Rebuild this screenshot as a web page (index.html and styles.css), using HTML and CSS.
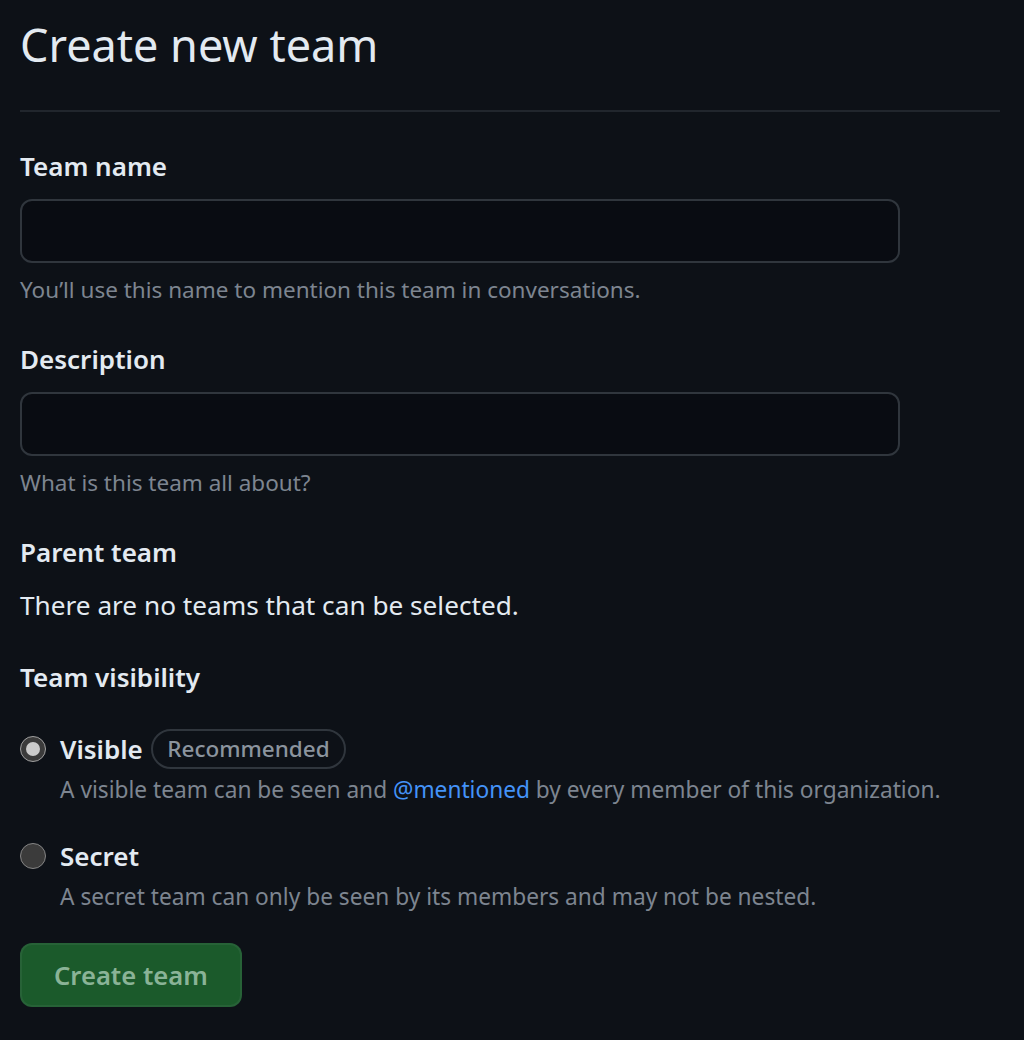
FILE: index.html
```html
<!DOCTYPE html>
<html lang="en">
<head>
<meta charset="utf-8">
<title>Create new team</title>
<link rel="stylesheet" href="styles.css">
</head>
<body>
<main class="page">
  <div class="subhead">
    <h1 class="subhead-heading">Create new team</h1>
  </div>
  <form class="team-form">
    <div class="form-group first">
      <label class="form-label" for="team-name">Team name</label>
      <input class="form-control" id="team-name" type="text">
      <p class="note">You’ll use this name to mention this team in conversations.</p>
    </div>
    <div class="form-group">
      <label class="form-label" for="team-desc">Description</label>
      <input class="form-control" id="team-desc" type="text">
      <p class="note">What is this team all about?</p>
    </div>
    <div class="form-group">
      <div class="form-label">Parent team</div>
      <p class="body-text">There are no teams that can be selected.</p>
    </div>
    <div class="form-group">
      <div class="form-label">Team visibility</div>
      <div class="radio-list">
        <div class="radio-item">
          <span class="radio checked"></span>
          <div class="radio-body">
            <div class="radio-title">Visible <span class="badge">Recommended</span></div>
            <p class="radio-note">A visible team can be seen and <a class="link" href="#">@mentioned</a> by every member of this organization.</p>
          </div>
        </div>
        <div class="radio-item second">
          <span class="radio"></span>
          <div class="radio-body">
            <div class="radio-title">Secret</div>
            <p class="radio-note">A secret team can only be seen by its members and may not be nested.</p>
          </div>
        </div>
      </div>
    </div>
    <button class="btn-primary" type="button">Create team</button>
  </form>
</main>
</body>
</html>
```
FILE: styles.css
```css
html, body {
  margin: 0;
  background: #0d1117;
}
body {
  font-family: "Noto Sans", "Liberation Sans", sans-serif;
  color: #e3eaf1;
}
.page {
  padding: 9px 24px 0 20px;
}
.subhead {
  padding-bottom: 29px;
  border-bottom: 2px solid #21262d;
}
.subhead-heading {
  margin: 0;
  font-size: 45px;
  font-weight: 400;
  line-height: 72px;
}
.form-group {
  margin-top: 30px;
}
.form-group.first {
  margin-top: 33px;
}
.form-label {
  display: block;
  font-size: 26px;
  font-weight: 600;
  line-height: 42px;
  margin-bottom: 12px;
}
.form-control {
  display: block;
  width: 880px;
  height: 64px;
  box-sizing: border-box;
  border: 2px solid #30363d;
  border-radius: 12px;
  background: #090c12;
  color: #e6edf3;
  font: inherit;
  font-size: 26px;
  padding: 0 16px;
}
.note {
  margin: 9px 0 0;
  font-size: 22.5px;
  line-height: 36px;
  color: #7d8590;
}
.body-text {
  margin: -1px 0 0;
  font-size: 26.2px;
  line-height: 42px;
}
.radio-list {
  margin-top: 30px;
}
.radio-item {
  display: flex;
  align-items: flex-start;
}
.radio-item.second {
  margin-top: 29px;
}
.radio {
  flex: none;
  width: 26px;
  height: 26px;
  box-sizing: border-box;
  border-radius: 50%;
  margin-top: 8px;
  margin-right: 14px;
  background: #3b3b3b;
  border: 1px solid #858585;
  position: relative;
}
.radio.checked {
  border-color: #a0a0a0;
}
.radio.checked::after {
  content: "";
  position: absolute;
  left: 5px;
  top: 5px;
  width: 14px;
  height: 14px;
  border-radius: 50%;
  background: #cbcbcb;
}
.radio-title {
  font-size: 26px;
  font-weight: 600;
  line-height: 42px;
  display: flex;
  align-items: center;
}
.badge {
  display: inline-block;
  margin-left: 8px;
  padding: 0 14.5px;
  border: 2px solid #30363d;
  border-radius: 999px;
  font-size: 22.5px;
  font-weight: 500;
  line-height: 36px;
  color: #8b949e;
}
.radio-note {
  margin: 2px 0 -2px;
  font-size: 22.7px;
  line-height: 36px;
  color: #7d8590;
}
.link {
  color: #4493f8;
  text-decoration: none;
}
.btn-primary {
  display: block;
  margin-top: 30px;
  height: 64px;
  padding: 0 32px;
  border: 2px solid rgba(240, 246, 252, 0.06);
  border-radius: 12px;
  background: #1b5a2b;
  color: #8ab397;
  font-family: inherit;
  font-size: 25.6px;
  font-weight: 600;
}
```
